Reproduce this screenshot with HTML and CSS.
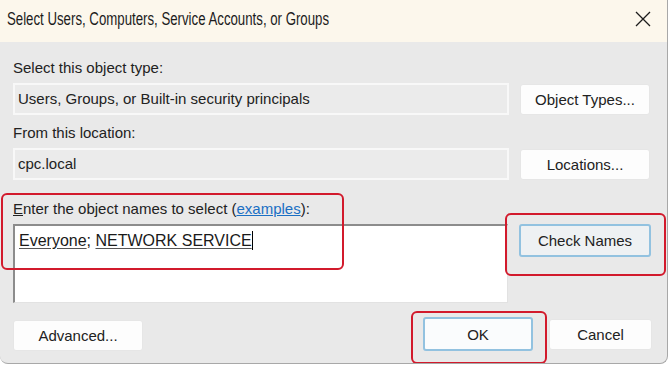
FILE: index.html
```html
<!DOCTYPE html>
<html lang="en">
  <head>
    <meta charset="UTF-8" />
    <meta name="viewport" content="width=device-width, initial-scale=1.0" />
    <title>Select Users, Computers, Service Accounts, or Groups</title>
    <link rel="stylesheet" href="styles.css">
  </head>
  <body>
    <div class="dialog">
      <header class="title-bar">
        <h1 class="dialog-title">Select Users, Computers, Service Accounts, or Groups</h1>
        <button class="close-button" aria-label="Close">
          <svg width="16" height="16" viewBox="0 0 16 16">
            <path d="M1 1 L15 15 M15 1 L1 15" stroke="#1c1c1c" stroke-width="1.3" fill="none" />
          </svg>
        </button>
      </header>

      <main class="dialog-body">
        <p class="field-label">Select this object type:</p>
        <div class="field-row">
          <div class="read-field">Users, Groups, or Built-in security principals</div>
          <button class="dlg-button">Object Types...</button>
        </div>

        <p class="field-label">From this location:</p>
        <div class="field-row">
          <div class="read-field">cpc.local</div>
          <button class="dlg-button">Locations...</button>
        </div>

        <p class="field-label names-label"><u>E</u>nter the object names to select (<a href="#" class="link">examples</a>):</p>
        <div class="field-row names-row">
          <div class="names-input">
            <u>Everyone</u>; <u>NETWORK SERVICE</u><span class="caret"></span>
          </div>
          <button class="dlg-button focused">Check Names</button>
        </div>

        <div class="button-row">
          <button class="dlg-button">Advanced...</button>
          <div class="confirm-buttons">
            <button class="dlg-button focused ok-button">OK</button>
            <button class="dlg-button cancel-button">Cancel</button>
          </div>
        </div>
      </main>

      <!-- red annotation boxes -->
      <div class="mark mark-names"></div>
      <div class="mark mark-check"></div>
      <div class="mark mark-ok"></div>
    </div>
  </body>
</html>
```

FILE: styles.css
```css
* {
  margin: 0;
  padding: 0;
  box-sizing: border-box;
}

body {
  background-color: #ffffff;
  font-family: "Liberation Sans", Arial, sans-serif;
  font-size: 15px;
  color: #222222;
  width: 670px;
  height: 367px;
  overflow: hidden;
}

.dialog {
  position: relative;
  width: 668px;
  height: 364px;
  background-color: #e9e9e9;
  border-right: 1px solid #a8a8a8;
  border-bottom: 1px solid #a8a8a8;
  border-radius: 0 0 8px 8px;
  overflow: hidden;
}

.title-bar {
  height: 42px;
  background-color: #fcf7ec;
  display: flex;
  justify-content: space-between;
  align-items: center;
  padding-left: 7px;
}

/* the title font is narrower than the body text */
.dialog-title {
  font-weight: normal;
  font-size: 18px;
  color: #1c1c1c;
  margin-top: -4px;
  white-space: nowrap;
  transform: scaleX(0.735);
  transform-origin: left center;
}

.close-button {
  width: 46px;
  height: 42px;
  background: none;
  border: none;
  display: flex;
  align-items: center;
  justify-content: center;
  margin-right: 1px;
  margin-top: -5px;
}

.dialog-body {
  padding: 17px 16px 0 13px;
}

.field-label {
  line-height: 18px;
  margin-bottom: 6px;
}

.field-row {
  display: flex;
  align-items: center;
  gap: 11px;
  margin-bottom: 9px;
}

.read-field {
  width: 496px;
  height: 32px;
  background-color: #ebebeb;
  border: 2px solid #f8f8f8;
  padding: 0 3px;
  line-height: 28px;
}

.dlg-button {
  width: 130px;
  height: 31px;
  background-color: #fdfdfd;
  border: 1px solid #e6e6e6;
  border-radius: 3px;
  font-family: "Liberation Sans", Arial, sans-serif;
  font-size: 15px;
  color: #222222;
}

.dlg-button.focused {
  border: 2px solid #92c2e0;
  background-color: #eef1f3;
}

.names-label {
  margin-top: 20px;
}

.names-row {
  align-items: flex-start;
  margin-bottom: 16px;
}

.names-input {
  width: 495px;
  height: 79px;
  background-color: #ffffff;
  border-top: 2px solid #8c8c8c;
  border-left: 2px solid #8c8c8c;
  border-right: 1px solid #e2e2e2;
  border-bottom: 1px solid #e2e2e2;
  padding: 5px 4px;
  font-size: 16px;
  line-height: 18px;
  color: #1a1a1a;
}

.names-input u {
  text-decoration-color: #555555;
  text-underline-offset: 2px;
}

.caret {
  display: inline-block;
  width: 1px;
  height: 19px;
  background-color: #000000;
  vertical-align: -4px;
}

.names-row .dlg-button {
  height: 33px;
  width: 132px;
}

.link {
  color: #1a6fc4;
}

.button-row {
  display: flex;
  justify-content: space-between;
  align-items: center;
}

.confirm-buttons {
  display: flex;
  gap: 16px;
  margin-right: -1px;
}

.ok-button.focused {
  width: 110px;
  height: 34px;
  background-color: #fafcfd;
  margin-top: -2px;
}

.cancel-button {
  width: 103px;
}

/* Annotation overlays */
.mark {
  position: absolute;
  border: 2px solid #d21a2c;
  border-radius: 6px;
}

.mark-names {
  left: 1px;
  top: 193px;
  width: 343px;
  height: 77px;
}

.mark-check {
  left: 505px;
  top: 213px;
  width: 161px;
  height: 63px;
}

.mark-ok {
  left: 411px;
  top: 311px;
  width: 136px;
  height: 53px;
}
```
